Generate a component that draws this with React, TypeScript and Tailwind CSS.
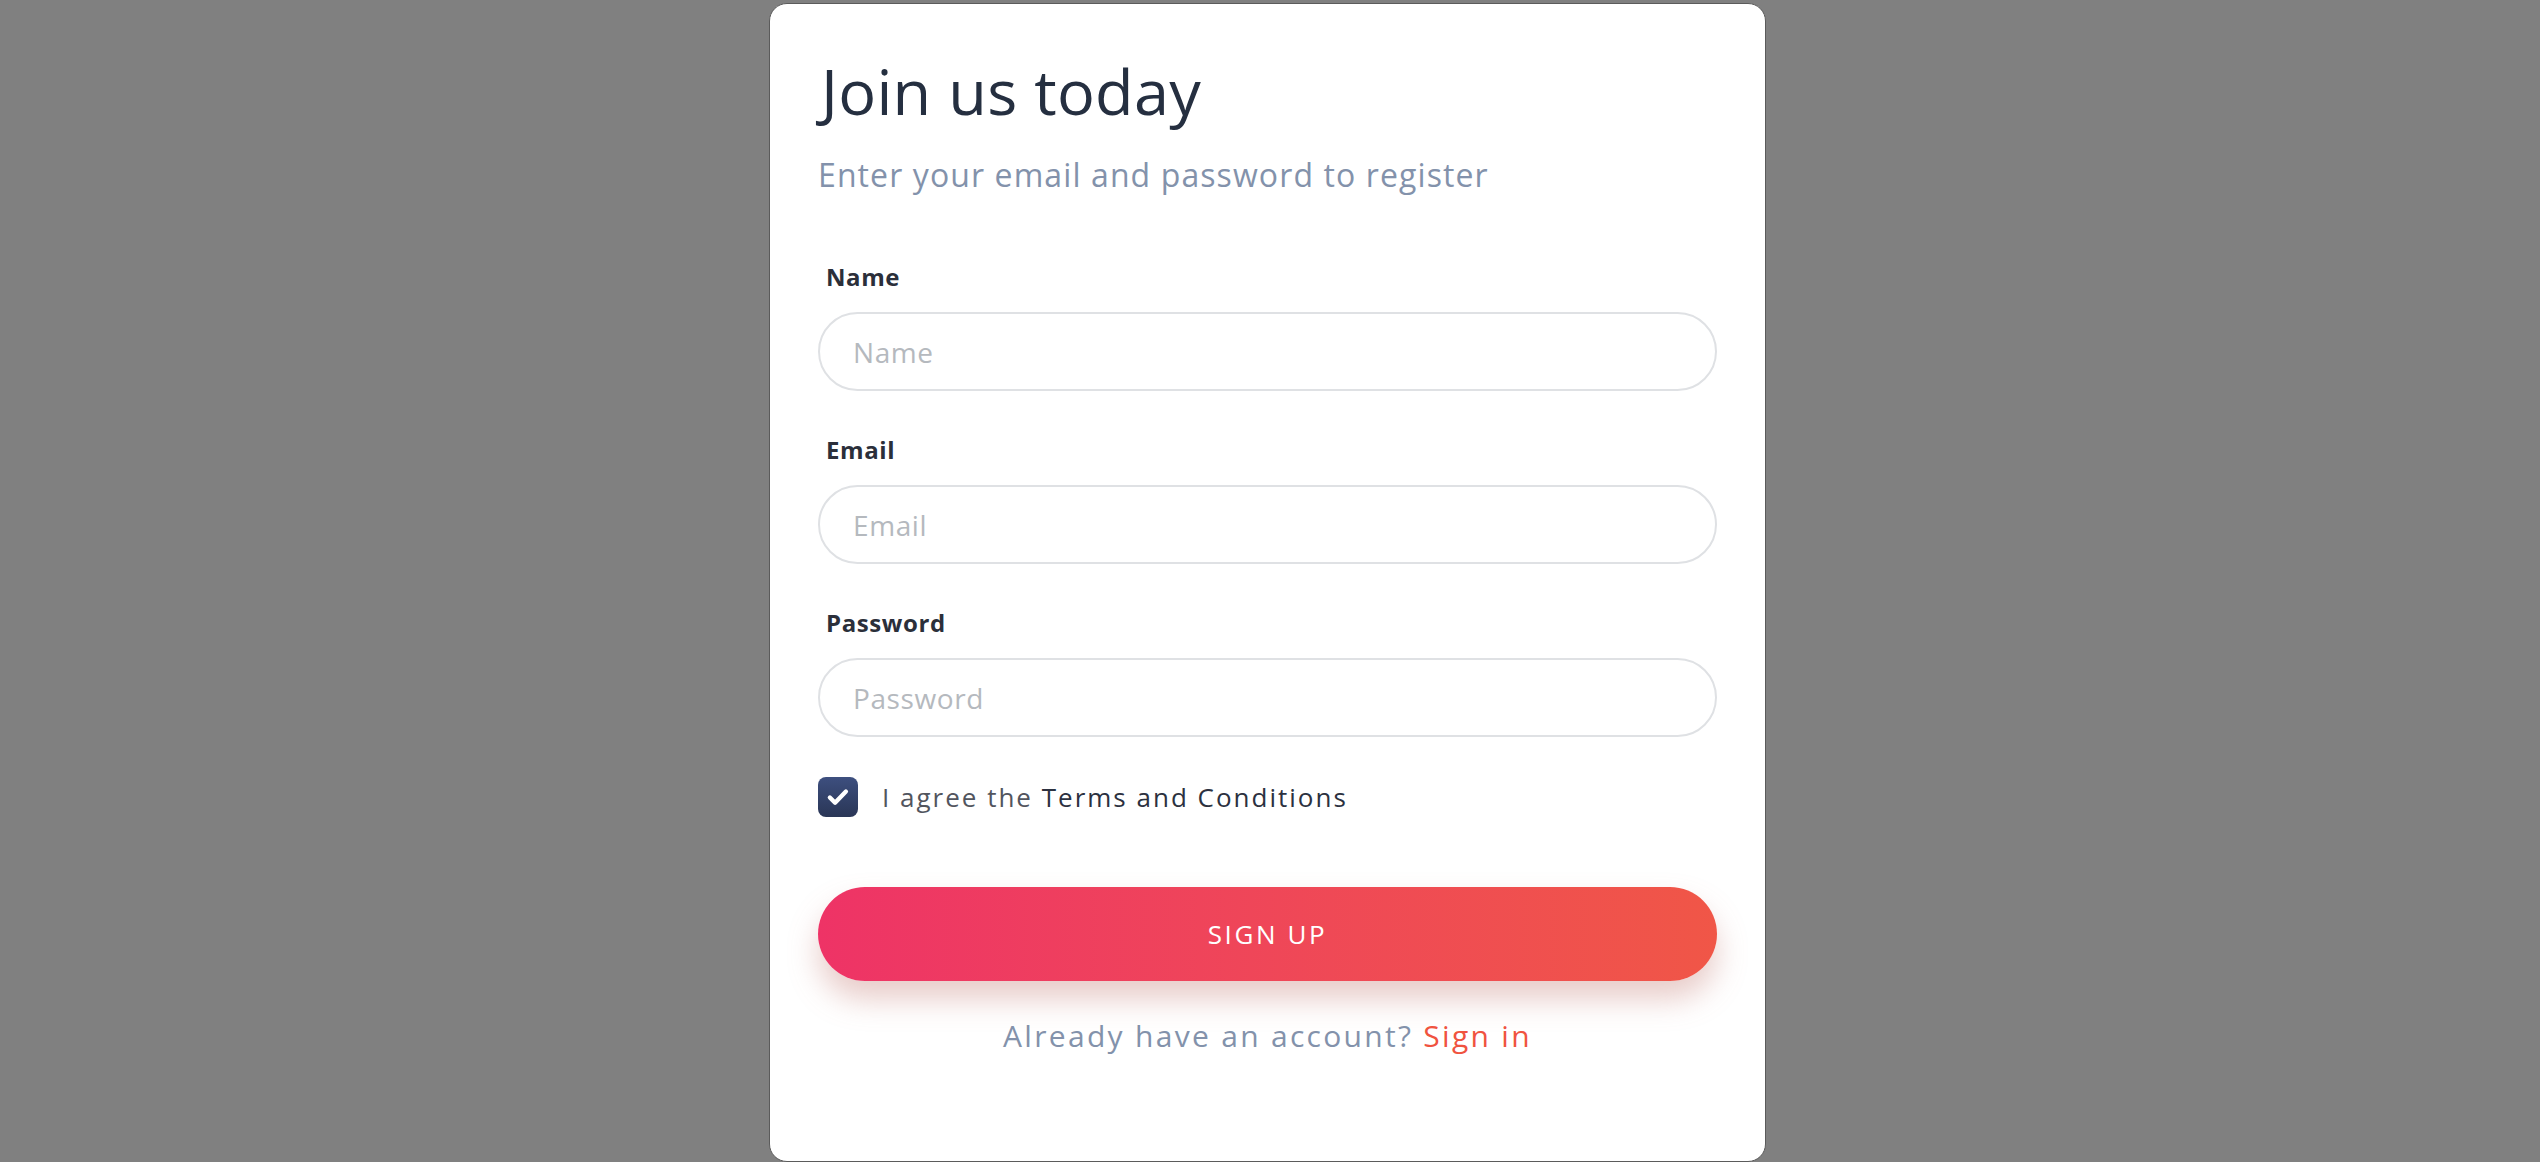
import React from "react";

const fields = [
  { label: "Name", type: "text" },
  { label: "Email", type: "email" },
  { label: "Password", type: "password" },
];

export default function App() {
  return (
    <div
      className="h-[1162px] overflow-hidden bg-[#808080] flex justify-center pr-[5px]"
      style={{ fontFamily: '"Open Sans", "Noto Sans", sans-serif' }}
    >
      <div className="mt-[3px] w-[997px] h-[1159px] shrink-0 rounded-[18px] border border-[#5b5b5b] bg-white px-[48px] pt-[51px]">
        <h1 className="ml-[3px] text-[63px] leading-[72px] font-normal tracking-[0.3px] text-[#252f40]">Join us today</h1>
        <p className="mt-[28px] text-[32px] leading-[40px] tracking-[1.1px] text-[#8392ab]">
          Enter your email and password to register
        </p>

        <form className="mt-[66px] flex flex-col gap-[43px]">
          {fields.map((f) => (
            <div key={f.label} className="flex flex-col">
              <label className="ml-[8px] text-[24px] leading-[32px] font-bold tracking-[0.6px] text-[#2b2f3a]">{f.label}</label>
              <input
                type={f.type}
                placeholder={f.label}
                className="mt-[19px] h-[79px] w-full rounded-full border-2 border-[#dfe1e4] bg-white pl-[33px] text-[28px] tracking-[0.6px] text-[#495057] placeholder:text-[#b5b9be] outline-none"
              />
            </div>
          ))}
        </form>

        <div className="mt-[40px] flex items-center gap-[24px]">
          <div className="flex h-[40px] w-[40px] items-center justify-center rounded-[8px] bg-gradient-to-b from-[#3d4f7f] to-[#2a3656]">
            <svg width="26" height="26" viewBox="0 0 24 24" fill="none">
              <path d="M4.5 12.5l4.8 4.8 10-10.3" stroke="white" strokeWidth="4" strokeLinecap="round" strokeLinejoin="round" />
            </svg>
          </div>
          <p className="text-[26px] leading-[36px] tracking-[2px] text-[#52555e]">
            I agree the <span className="font-medium text-[#2c3140]">Terms and Conditions</span>
          </p>
        </div>

        <button
          type="button"
          className="mt-[70px] h-[94px] w-full rounded-full bg-gradient-to-r from-[#ee3366] to-[#f05647] text-[26px] tracking-[2.6px] text-white shadow-[0_18px_30px_rgba(190,110,100,0.35)]"
        >
          SIGN UP
        </button>

        <p className="mt-[35px] text-center text-[30px] leading-[40px] tracking-[2.3px] text-[#8392ab]">
          Already have an account? <a href="#" className="font-medium text-[#f0533f]">Sign in</a>
        </p>
      </div>
    </div>
  );
}
